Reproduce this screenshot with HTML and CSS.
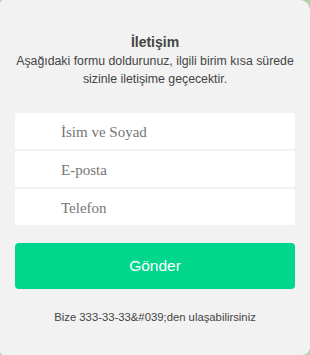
FILE: index.html
```html
<!DOCTYPE html>
<html lang="tr">
<head>
    <meta charset="UTF-8">
    <meta name="viewport" content="width=device-width, initial-scale=1.0">
    <title>İletişim</title>
    <link rel="stylesheet" href="styles.css">
</head>
<body>
    <div class="contact">
        <h2 class="contact_title">İletişim</h2>
        <p class="contact_desc">Aşağıdaki formu doldurunuz, ilgili birim kısa sürede sizinle iletişime geçecektir.</p>

        <!-- form alanlari -->
        <form class="contact_form">
            <div class="fields">
                <input type="text" placeholder="İsim ve Soyad">
                <input type="text" placeholder="E-posta">
                <input type="text" placeholder="Telefon">
            </div>
            <button type="button" class="send_btn">Gönder</button>
        </form>

        <p class="contact_note">Bize 333-33-33&amp;#039;den ulaşabilirsiniz</p>
    </div>
</body>
</html>
```

FILE: styles.css
```css
*{
    margin: 0;
    padding: 0;
    box-sizing: border-box;
}
html,body{
    height: 100%;
}
body{
    background: #b7d1ae;
    font-family: "Liberation Sans", Arial, sans-serif;
}
.contact{
    height: 355px;
    background: #f2f2f2;
    border-radius: 4px 10px 8px 4px;
    padding: 33px 15px 0 15px;
    text-align: center;
    color: #444;
}
.contact_title{
    font-size: 14px;
    font-weight: bold;
    line-height: 18px;
}
.contact_desc{
    font-size: 12.3px;
    line-height: 18px;
    margin: 1px -6px 0;
}
.contact_form{
    margin-top: 25px;
}
.contact_form .fields{
    display: flex;
    flex-direction: column;
    gap: 2px;
}
.contact_form input{
    height: 36px;
    border: none;
    border-radius: 2px;
    background: #fff;
    padding-left: 46px;
    padding-top: 2px;
    font-family: "Liberation Serif", "Times New Roman", serif;
    font-size: 15px;
    color: #555;
    outline: none;
}
.contact_form input::placeholder{
    color: #757575;
}
.send_btn{
    display: block;
    width: 100%;
    height: 46px;
    margin-top: 18px;
    border: none;
    border-radius: 4px;
    background: #00d68c;
    color: #fff;
    font-family: "Liberation Sans", Arial, sans-serif;
    font-size: 15.5px;
    cursor: pointer;
}
.contact_note{
    margin-top: 21px;
    font-size: 11.3px;
    line-height: 14px;
}
```
